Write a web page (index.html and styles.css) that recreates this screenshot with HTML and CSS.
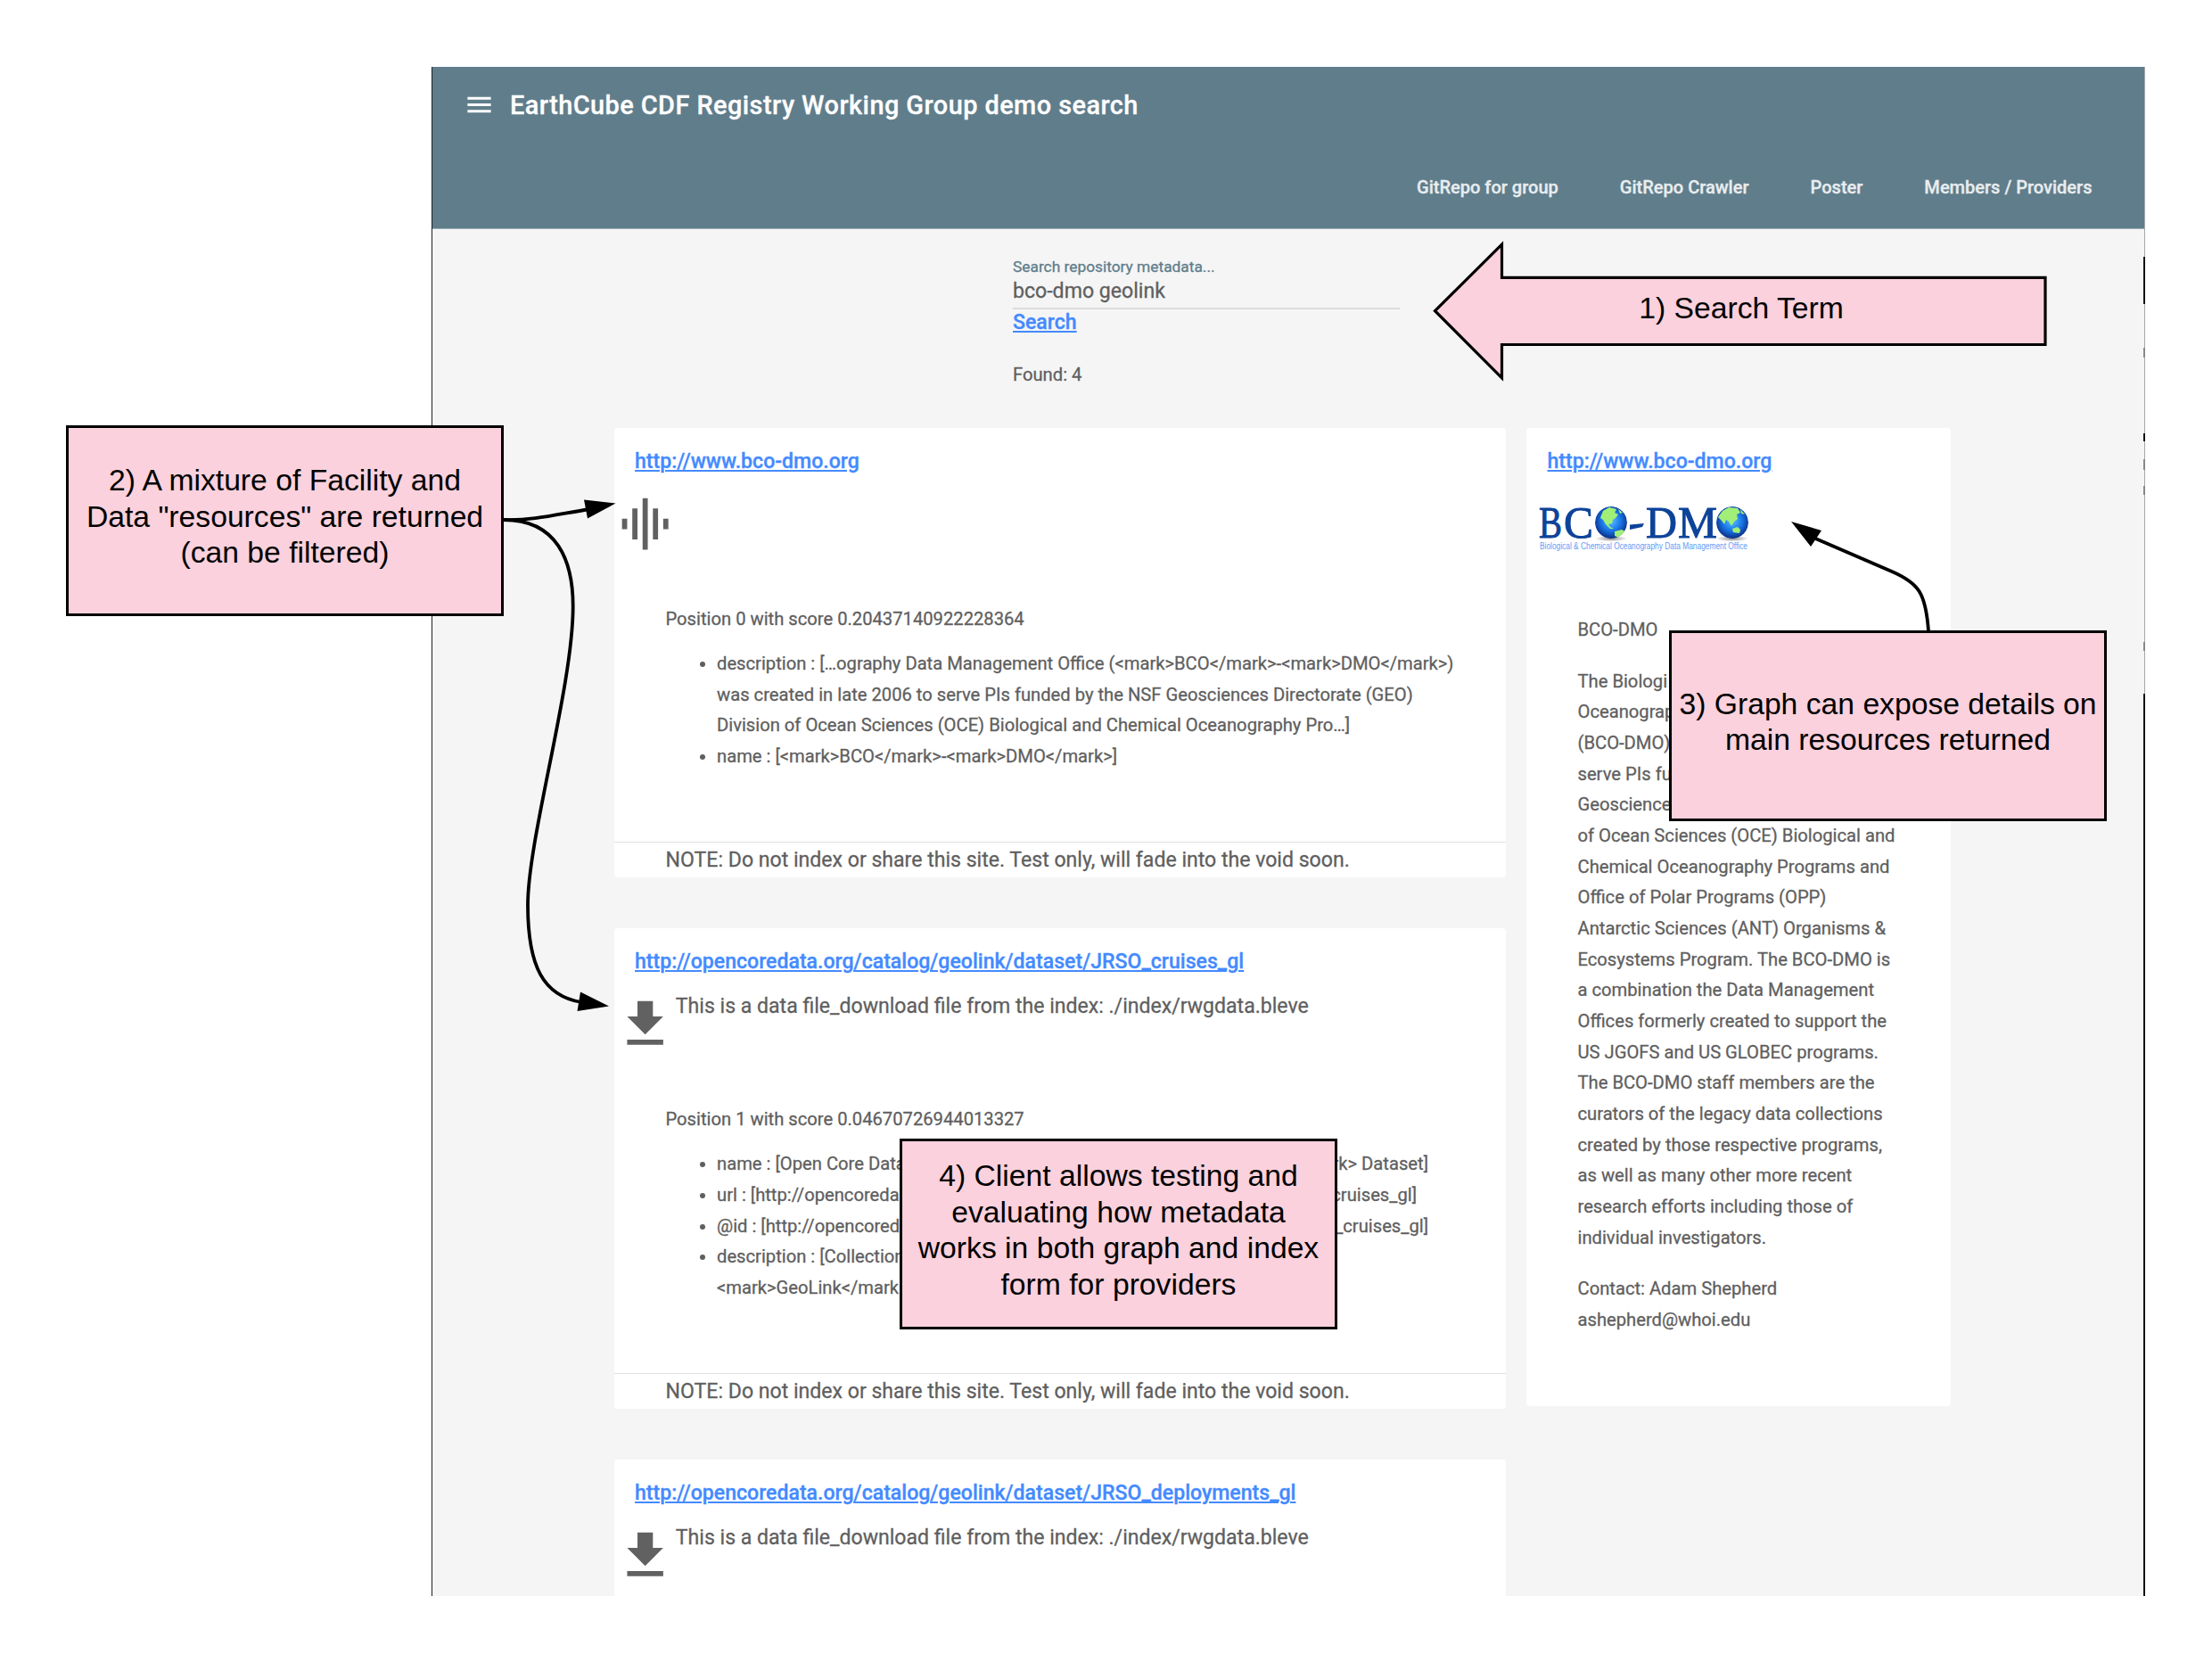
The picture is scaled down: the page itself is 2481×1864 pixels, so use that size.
FILE: index.html
```html
<!DOCTYPE html>
<html lang="en">
<head>
<meta charset="utf-8">
<title>EarthCube CDF Registry Working Group demo search</title>
<link rel="stylesheet" href="styles.css">
</head>
<body>
<div class="app">
  <header class="header">
    <div class="header-top">
      <svg class="menu-icon" viewBox="0 0 24 24"><path d="M3 18h18v-2H3v2zm0-5h18v-2H3v2zm0-7v2h18V6H3z"/></svg>
      <h1 class="title">EarthCube CDF Registry Working Group demo search</h1>
    </div>
    <nav class="nav">
      <a>GitRepo for group</a><a>GitRepo Crawler</a><a>Poster</a><a>Members / Providers</a>
    </nav>
  </header>
  <section class="search">
    <label class="search-label">Search repository metadata...</label>
    <div class="search-input">bco-dmo geolink</div>
    <a class="link search-link">Search</a>
    <div class="found">Found: 4</div>
  </section>
  <main class="content">
    <div class="results">
      <article class="card">
        <div class="card-title"><a class="link">http://www.bco-dmo.org</a></div>
        <div class="card-media">
          <svg class="card-icon" viewBox="0 0 24 24"><path d="M7 18h2V6H7v12zm4 4h2V2h-2v20zm-8-8h2v-4H3v4zm12 4h2V6h-2v12zm4-8v4h2v-4h-2z"/></svg>
        </div>
        <div class="card-body">
          <p class="score">Position 0 with score 0.20437140922228364</p>
          <ul class="fields">
            <li>description : […ography Data Management Office (&lt;mark&gt;BCO&lt;/mark&gt;-&lt;mark&gt;DMO&lt;/mark&gt;)<br>was created in late 2006 to serve PIs funded by the NSF Geosciences Directorate (GEO)<br>Division of Ocean Sciences (OCE) Biological and Chemical Oceanography Pro…]</li>
            <li>name : [&lt;mark&gt;BCO&lt;/mark&gt;-&lt;mark&gt;DMO&lt;/mark&gt;]</li>
          </ul>
        </div>
        <footer class="card-note">NOTE: Do not index or share this site. Test only, will fade into the void soon.</footer>
      </article>
      <article class="card">
        <div class="card-title"><a class="link">http://opencoredata.org/catalog/geolink/dataset/JRSO_cruises_gl</a></div>
        <div class="card-media">
          <svg class="card-icon" viewBox="0 0 24 24"><path d="M19 9h-4V3H9v6H5l7 7 7-7zM5 18v2h14v-2H5z"/></svg>
          <span class="media-text">This is a data file_download file from the index: ./index/rwgdata.bleve</span>
        </div>
        <div class="card-body">
          <p class="score">Position 1 with score 0.04670726944013327</p>
          <ul class="fields">
            <li><div class="split"><span>name : [Open Core Data</span><span class="tail">rk&gt; Dataset]</span></div></li>
            <li><div class="split"><span>url : [http://opencoreda</span><span class="tail tail-url">cruises_gl]</span></div></li>
            <li><div class="split"><span>@id : [http://opencored</span><span class="tail">_cruises_gl]</span></div></li>
            <li>description : [Collection<br>&lt;mark&gt;GeoLink&lt;/mark</li>
          </ul>
        </div>
        <footer class="card-note">NOTE: Do not index or share this site. Test only, will fade into the void soon.</footer>
      </article>
      <article class="card">
        <div class="card-title"><a class="link">http://opencoredata.org/catalog/geolink/dataset/JRSO_deployments_gl</a></div>
        <div class="card-media">
          <svg class="card-icon" viewBox="0 0 24 24"><path d="M19 9h-4V3H9v6H5l7 7 7-7zM5 18v2h14v-2H5z"/></svg>
          <span class="media-text">This is a data file_download file from the index: ./index/rwgdata.bleve</span>
        </div>
      </article>
    </div>
    <aside class="card details">
      <div class="card-title"><a class="link">http://www.bco-dmo.org</a></div>
      <svg class="logo" viewBox="0 0 260 80">
        <defs>
          <radialGradient id="sea" cx=".5" cy=".45" r=".55"><stop offset="0" stop-color="#5cc0ff"/><stop offset=".55" stop-color="#1976e8"/><stop offset="1" stop-color="#0a2f86"/></radialGradient>
          <radialGradient id="shade"><stop offset="0" stop-color="#555" stop-opacity=".7"/><stop offset="1" stop-color="#555" stop-opacity="0"/></radialGradient>
          <clipPath id="disc"><circle r="18"/></clipPath>
        </defs>
        <g class="logo-letters">
          <text x="11" y="52.500" textLength="26" lengthAdjust="spacingAndGlyphs">B</text>
          <text x="39" y="52.500" textLength="33" lengthAdjust="spacingAndGlyphs">C</text>
          <text x="131" y="52.500" textLength="35" lengthAdjust="spacingAndGlyphs">D</text>
          <text x="167" y="52.500" textLength="44" lengthAdjust="spacingAndGlyphs">M</text>
        </g>
        <path class="logo-dash" d="M113 38.500l16-1.500-2 4-14 3z"/>
        <ellipse cx="92" cy="54" rx="18" ry="3.500" fill="url(#shade)"/>
        <ellipse cx="228" cy="54" rx="18" ry="3.500" fill="url(#shade)"/>
        <g transform="translate(92 36)" clip-path="url(#disc)">
          <circle r="18" fill="url(#sea)"/>
          <path class="land" d="M-9-13L-2-17 6-15 4-11 8-9 5-5 2-3 1 1-3 2-1 5 3 7-1 7-6 2-9-3-12-5zM4 10l8-2 4 2-6 8-6-3zM8-15l5 4-3 1z"/>
        </g>
        <g transform="translate(228 36)" clip-path="url(#disc)">
          <circle r="18" fill="url(#sea)"/>
          <path class="land" d="M-16-6L-11-13-4-17 6-16 9-11 5-9 6-4 2-1-1 4-4-1-7-3-9 2-12-2zM0 7l6-2 3 3-1 4-7-1zM9-15l5 6-4-1z"/>
        </g>
        <text class="logo-tag" x="12" y="65.500" textLength="233" lengthAdjust="spacingAndGlyphs">Biological &amp; Chemical Oceanography Data Management Office</text>
      </svg>
      <div class="details-body">
        <p>BCO-DMO</p>
        <p>The Biologi<br>Oceanograp<br>(BCO-DMO)<br>serve PIs fu<br>Geoscience<br>of Ocean Sciences (OCE) Biological and<br>Chemical Oceanography Programs and<br>Office of Polar Programs (OPP)<br>Antarctic Sciences (ANT) Organisms &amp;<br>Ecosystems Program. The BCO-DMO is<br>a combination the Data Management<br>Offices formerly created to support the<br>US JGOFS and US GLOBEC programs.<br>The BCO-DMO staff members are the<br>curators of the legacy data collections<br>created by those respective programs,<br>as well as many other more recent<br>research efforts including those of<br>individual investigators.</p>
        <p>Contact: Adam Shepherd<br>ashepherd@whoi.edu</p>
      </div>
    </aside>
  </main>
</div>

<svg class="overlay" viewBox="0 0 2481 1864">
  <path class="edge" d="M2405 288v53M2405 486v9M2405 778V1790"/>
  <path class="edge edge-faint" d="M2405 390v11M2405 515v12M2405 545v10M2405 720v10"/>
  <path class="block-arrow" d="M1609.500 348.700L1684.500 274V311.300H2294V386.500H1684.500V424z"/>
  <path class="wire" d="M565 583C600 584 628 576 662 571"/>
  <path class="wire" d="M565 583C625 583 642.700 629 642.700 680C642.700 770 592 940 592 1015C592 1085 610 1117 652 1124"/>
  <path class="wire" d="M2163 708C2160 665 2152 654 2122 641L2034 603"/>
  <path class="head" d="M690.500 564.500L655 560.500 659 581.500zM683 1128.500L651 1112.500 647.500 1134zM2009 585L2043 595 2031 613z"/>
</svg>
<div class="callout callout-term">1) Search Term</div>
<div class="callout box callout-mixture">2) A mixture of Facility and<br>Data "resources" are returned<br>(can be filtered)</div>
<div class="callout box callout-graph">3) Graph can expose details on<br>main resources returned</div>
<div class="callout box callout-client">4) Client allows testing and<br>evaluating how metadata<br>works in both graph and index<br>form for providers</div>
</body>
</html>
```
FILE: styles.css
```css
* { box-sizing: border-box; }
body {
  margin: 0;
  width: 2481px;
  height: 1864px;
  padding: 75px 75px 74px 484px;
  background: #fff;
  position: relative;
  overflow: hidden;
  font-family: Roboto, "Liberation Sans", sans-serif;
  color: #5f5f5f;
}
h1, p, ul { margin: 0; padding: 0; font-weight: inherit; }
svg { display: block; }

.app {
  width: 1922px;
  height: 1715px;
  overflow: hidden;
  background: #f5f5f5;
  border-left: 1px solid #1d2124;
  border-right: 1px solid #a4a8aa;
  -webkit-text-stroke: .3px currentColor;
}
.header {
  height: 182px;
  background: #607d8b;
  display: flex;
  flex-direction: column;
  justify-content: space-between;
  border-bottom: 1px solid #9db0b9;
}
.header-top { display: flex; align-items: center; padding: 25px 0 0 35px; }
.menu-icon { width: 35px; height: 35px; fill: #fff; margin-right: 17px; }
.title { font-size: 28.9px; line-height: 34px; font-weight: 500; letter-spacing: .0155em; color: #fff; white-space: nowrap; }
.nav {
  display: flex;
  justify-content: flex-end;
  gap: 69px;
  padding: 0 58.500px 33px 0;
  font-size: 20.05px;
  line-height: 26px;
  font-weight: 500;
  color: #e9edef;
}

.search { display: flex; flex-direction: column; width: 434px; margin-left: 651px; padding-top: 31px; height: 223px; }
.search-label { font-size: 17.33px; line-height: 22px; color: #607d8b; }
.search-input { font-size: 23.1px; line-height: 28px; height: 37px; padding-top: 3px; border-bottom: 2px solid #dcdcdc; }
.link { color: #448aff; font-size: 23.1px; font-weight: 500; text-decoration: underline; text-decoration-thickness: 2px; text-underline-offset: 2px; }
.search-link { line-height: 28px; padding-top: 1px; }
.found { font-size: 20.2px; line-height: 24px; margin-top: 32px; }

.content { display: flex; align-items: flex-start; gap: 23.500px; padding-left: 203.500px; }
.results { display: flex; flex-direction: column; gap: 57.500px; width: 1000px; }
.card { background: #fff; border-radius: 4px; }
.card-title { height: 73px; padding: 20px 23.500px 0; line-height: 35px; }
.card-media { display: flex; height: 124px; font-size: 23.08px; line-height: 28px; }
.media-text { padding-top: 1px; }
.card-icon { width: 69.300px; height: 69.300px; fill: #616161; flex: none; }
.card-body { padding: 0 58px 78px; font-size: 20.21px; line-height: 34.65px; }
.fields { margin-top: 15.500px; padding-left: 57.500px; }
.split { display: flex; justify-content: space-between; margin-right: 28.500px; }
.tail-url { margin-right: 13px; }
.card-note { height: 40px; padding-left: 58px; border-top: 1.5px solid #e0e0e0; font-size: 23.08px; line-height: 39.500px; }

.details { width: 475.500px; height: 1097px; }
.logo { width: 260px; height: 80px; margin-left: 2.500px; margin-top: -3px; overflow: visible; -webkit-text-stroke: 0; }
.logo-letters { font-family: "Liberation Serif", serif; font-size: 51px; fill: #0d4399; stroke: #0d4399; stroke-width: 1; }
.logo-dash { fill: #0d4399; }
.land { fill: #a2ef78; }
.logo-tag { font-family: "Liberation Sans", sans-serif; font-size: 10px; fill: #5f9cf8; }
.details-body { padding: 59px 0 0 57.500px; font-size: 20.21px; line-height: 34.65px; white-space: nowrap; }
.details-body p + p { margin-top: 23.1px; }

.overlay { position: absolute; left: 0; top: 0; width: 2481px; height: 1864px; }
.edge { stroke: #111; stroke-width: 2; }
.edge-faint { stroke: #85898b; }
.block-arrow { fill: #fad1dc; stroke: #000; stroke-width: 3.2; }
.wire { fill: none; stroke: #000; stroke-width: 3.8; }
.callout { position: absolute; font-family: "Liberation Sans", Arial, sans-serif; font-size: 33.7px; line-height: 40.5px; color: #000; text-align: center; white-space: nowrap; }
.callout-term { left: 1686px; top: 325px; width: 534px; }
.box { width: 491px; height: 214px; display: grid; place-content: center; background: #fad1dc; border: 3px solid #000; padding-bottom: 10px; }
.callout-mixture { left: 74px; top: 477px; }
.callout-graph { left: 1872px; top: 707px; }
.callout-client { left: 1009px; top: 1277px; }
```
